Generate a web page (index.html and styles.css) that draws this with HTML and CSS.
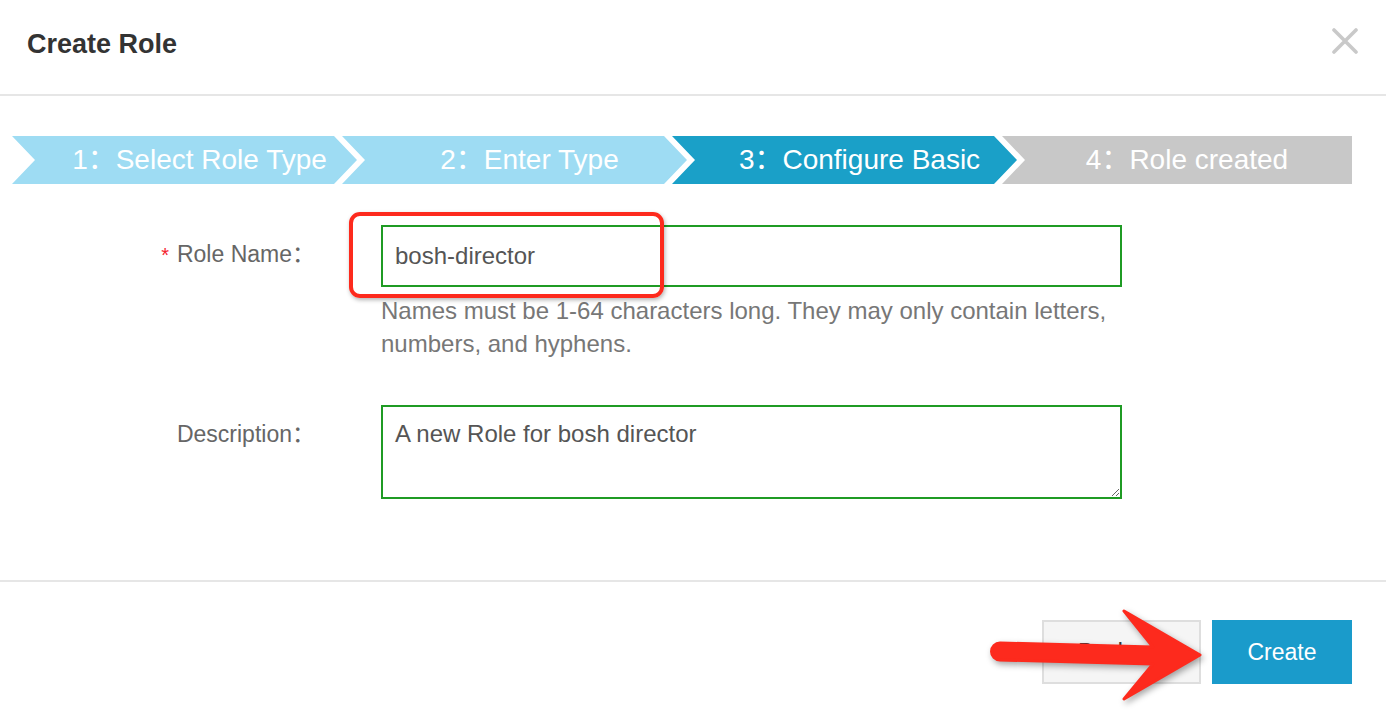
FILE: index.html
```html
<!DOCTYPE html>
<html lang="en">
<head>
<meta charset="utf-8">
<title>Create Role</title>
<link rel="stylesheet" href="styles.css">
</head>
<body>
<div class="dialog">
  <header class="dlg-head">
    <h1 class="dlg-title">Create Role</h1>
    <button class="dlg-close" type="button" aria-label="Close">
      <svg width="26" height="26" viewBox="0 0 26 26"><path d="M2 2 L24 24 M24 2 L2 24" stroke="#c9c9c9" stroke-width="3.6" stroke-linecap="round" fill="none"/></svg>
    </button>
  </header>

  <main class="dlg-body">
    <ol class="steps">
      <li class="step step-done">1：Select Role Type</li>
      <li class="step step-done">2：Enter Type</li>
      <li class="step step-active">3：Configure Basic</li>
      <li class="step step-todo step-last">4：Role created</li>
    </ol>

    <form class="form">
      <div class="form-row">
        <label class="form-label" for="roleName"><span class="req">*</span>Role Name：</label>
        <div class="form-ctrl">
          <input id="roleName" class="field" type="text" value="bosh-director">
          <p class="help">Names must be 1-64 characters long. They may only contain letters, numbers, and hyphens.</p>
        </div>
      </div>
      <div class="form-row form-row-desc">
        <label class="form-label" for="roleDesc">Description：</label>
        <div class="form-ctrl">
          <textarea id="roleDesc" class="field area">A new Role for bosh director</textarea>
        </div>
      </div>
    </form>
  </main>

  <footer class="dlg-foot">
    <button class="btn btn-default" type="button">Back</button>
    <button class="btn btn-primary" type="button">Create</button>
  </footer>

  <div class="mark-box"></div>
  <svg class="mark-arrow" width="240" height="120" viewBox="0 0 240 120">
    <path d="M20 48 L173 52 L144 16 L220 60 L144 104 L173 69 L20 65 A8.5 8.5 0 0 1 20 48 Z" fill="#fd2a1d" stroke="#fd2a1d" stroke-width="3" stroke-linejoin="round"/>
  </svg>
</div>
</body>
</html>
```

FILE: styles.css
```css
* { box-sizing: border-box; }

html, body {
  margin: 0;
  padding: 0;
  background: #fff;
}

body {
  font-family: "Liberation Sans", "Noto Sans CJK SC", Arial, sans-serif;
}

.dialog {
  position: relative;
  width: 1386px;
  height: 718px;
  display: flex;
  flex-direction: column;
  background: #fff;
  overflow: hidden;
}

/* header */
.dlg-head {
  height: 96px;
  flex: none;
  display: flex;
  align-items: center;
  justify-content: space-between;
  padding: 0 28px 6px 27px;
  border-bottom: 2px solid #e6e6e6;
}

.dlg-title {
  margin: 0;
  font-size: 27px;
  font-weight: 700;
  line-height: 1;
  color: #333;
}

.dlg-close {
  width: 26px;
  height: 26px;
  padding: 0;
  margin: 0 0 6px 0;
  border: 0;
  background: none;
  display: flex;
}

/* body */
.dlg-body {
  flex: 1;
  padding-top: 40px;
}

.steps {
  list-style: none;
  margin: 0 0 0 12px;
  padding: 0;
  display: flex;
  height: 48px;
}

.step {
  flex: none;
  width: 345px;
  height: 48px;
  line-height: 48px;
  padding-left: 30px;
  text-align: center;
  white-space: nowrap;
  font-size: 28px;
  color: #fff;
  clip-path: polygon(0 0, calc(100% - 23px) 0, 100% 50%, calc(100% - 23px) 100%, 0 100%, 23px 50%);
}

.step + .step { margin-left: -15px; }

.step-done { background: #9edcf3; }
.step-active { background: #1aa0c8; }
.step-todo { background: #c8c8c8; }

.step-last {
  width: 350px;
  padding-left: 20px;
  clip-path: polygon(0 0, 100% 0, 100% 100%, 0 100%, 23px 50%);
}

/* form */
.form {
  margin-top: 41px;
}

.form-row {
  display: grid;
  grid-template-columns: 381px 741px;
}

.form-row-desc {
  margin-top: 45px;
}

.form-label {
  text-align: right;
  padding-right: 66px;
  font-size: 23px;
  line-height: 58px;
  color: #666;
  white-space: nowrap;
}

.req {
  color: #f5222d;
  font-size: 20px;
  margin-right: 8px;
}

.field {
  display: block;
  width: 741px;
  height: 62px;
  margin: 0;
  padding: 0 12px;
  border: 2px solid #1f9b24;
  border-radius: 0;
  background: #fff;
  outline: none;
  font-family: "Liberation Sans", Arial, sans-serif;
  font-size: 24px;
  color: #555;
}

.area {
  height: 94px;
  padding: 9px 12px;
  line-height: 36px;
  resize: both;
}

.help {
  margin: 7px 0 0;
  font-size: 24px;
  line-height: 33px;
  color: #777;
}

/* footer */
.dlg-foot {
  height: 138px;
  flex: none;
  border-top: 2px solid #e6e6e6;
  padding: 38px 34px 0 0;
  display: flex;
  justify-content: flex-end;
  align-items: flex-start;
  gap: 11px;
}

.btn {
  height: 64px;
  margin: 0;
  font-family: "Liberation Sans", Arial, sans-serif;
  font-size: 23px;
  border: 2px solid;
  border-radius: 0;
}

.btn-default {
  width: 159px;
  background: #f5f5f5;
  border-color: #dedede;
  color: #333;
  text-align: left;
  padding: 0 0 0 34px;
}

.btn-primary {
  width: 140px;
  background: #1a9bcb;
  border-color: #1a9bcb;
  color: #fff;
  padding: 0;
}

/* annotation overlays */
.mark-box {
  position: absolute;
  left: 349px;
  top: 212px;
  width: 315px;
  height: 86px;
  border: 4px solid #fd2a1d;
  border-radius: 11px;
  box-shadow: 1px 2px 4px rgba(0, 0, 0, 0.3);
}

.mark-arrow {
  position: absolute;
  left: 980px;
  top: 595px;
  filter: drop-shadow(2px 3px 3px rgba(0, 0, 0, 0.35));
}
```
